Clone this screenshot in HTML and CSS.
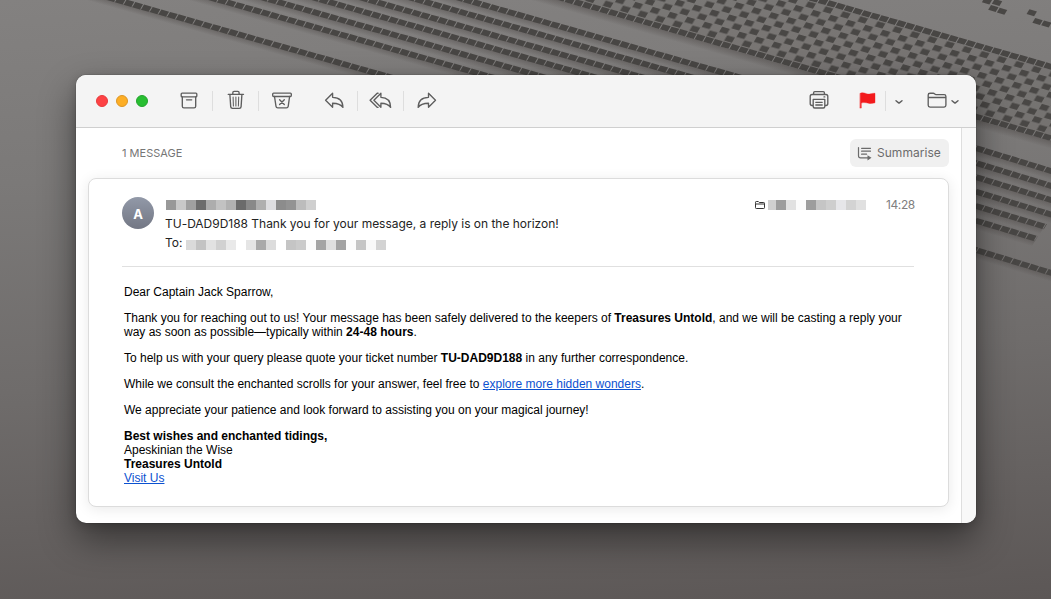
FILE: index.html
```html
<!DOCTYPE html>
<html lang="en">
<head>
<meta charset="utf-8">
<title>Mail</title>
<link rel="stylesheet" href="styles.css">
</head>
<body>
<svg class="wallpaper" viewBox="0 0 1051 599" aria-hidden="true">
  <defs>
    <pattern id="checker" width="17.36" height="14.3" patternUnits="userSpaceOnUse" x="-4.34" y="-3.575">
      <rect x="0.5" y="0.5" width="7.7" height="6.1"/>
      <rect x="9.18" y="7.65" width="7.7" height="6.1"/>
    </pattern>
    <linearGradient id="stripe" x2="0" y2="1"><stop offset="0" stop-color="#55504e" stop-opacity=".55"/><stop offset="1" stop-color="#55504e" stop-opacity="0"/></linearGradient>
    <g id="left"><rect class="shade" x="-300" y="2" width="700" height="7"/><path class="dash" d="M-304 0H400"/></g>
    <g id="right"><rect class="shade" x="-9" y="2" width="100" height="7"/><path class="dash" d="M-12.7 0H100"/></g>
  </defs>
  <g transform="matrix(1 .286 -.507 .855 786 12.3)">
    <rect class="veil" x="-290" y="-18" width="620" height="66"/>
    <rect class="checks" x="-290.8" y="-17.9" width="640" height="64.4"/>
    <path class="dash" d="M-264.14 -21.45H340M-264.14 50.05H340"/>
    <rect class="shade" x="-290" y="53" width="640" height="8"/>
  </g>
  <use href="#left" transform="matrix(1 .283 -.507 .855 482 4.4)"/>
  <use href="#left" transform="matrix(1 .283 -.507 .855 433.5 4.2)"/>
  <use href="#left" transform="matrix(1 .283 -.507 .855 421.5 14.8)"/>
  <use href="#left" transform="matrix(1 .283 -.507 .855 355 9.3)"/>
  <use href="#left" transform="matrix(1 .283 -.507 .855 356 24)"/>
  <use href="#left" transform="matrix(1 .283 -.507 .855 357.5 39.2)"/>
  <use href="#left" transform="matrix(1 .283 -.507 .855 134 4.7)"/>
  <use href="#right" transform="matrix(1 .305 -.507 .855 980 149.3)"/>
  <use href="#right" transform="matrix(1 .305 -.507 .855 981 164.5)"/>
  <use href="#right" transform="matrix(1 .305 -.507 .855 980 178.3)"/>
  <use href="#right" transform="matrix(1 .305 -.507 .855 979.5 192.7)"/>
  <g transform="matrix(1 .3 -.507 .855 979.3 207)"><rect class="shade" x="-9" y="2" width="74" height="7"/><path class="dash" d="M-12.7 0H66"/></g>
  <g transform="matrix(1 .3 -.507 .855 979.3 221.7)"><rect class="shade" x="-9" y="2" width="66" height="7"/><path class="dash" d="M-12.7 0H57"/></g>
  <use href="#right" transform="matrix(1 .305 -.507 .855 981.7 251.7)"/>
  <g class="bits">
    <path transform="matrix(1 .29 -.507 .855 987 1)" d="M-3.7-2.8h7.5v5.6h-7.5z"/>
    <path transform="matrix(1 .29 -.507 .855 997 2.5)" d="M-3.7-2.8h7.5v5.6h-7.5z"/>
    <path transform="matrix(1 .29 -.507 .855 993.3 8.5)" d="M-3.7-2.8h7.5v5.6h-7.5z"/>
    <path transform="matrix(1 .29 -.507 .855 1002 11.3)" d="M-3.7-2.8h7.5v5.6h-7.5z"/>
    <path transform="matrix(1 .29 -.507 .855 1031.7 12.7)" d="M-3.7-2.8h7.5v5.6h-7.5z"/>
    <path transform="matrix(1 .29 -.507 .855 1037.5 21.5)" d="M-3.7-2.8h7.5v5.6h-7.5z"/>
    <path transform="matrix(1 .29 -.507 .855 1046.3 24)" d="M-3.7-2.8h7.5v5.6h-7.5z"/>
  </g>
</svg>

<main class="window">
  <header class="toolbar">
    <div class="lights"><i class="light close"></i><i class="light minimise"></i><i class="light zoom"></i></div>
    <div class="group">
      <span class="tool"><svg class="icon" viewBox="0 0 24 24"><rect x="3.2" y="4.1" width="15.6" height="3.8" rx=".9"/><path d="M4.300 7.900v9.300q0 1.600 1.600 1.600h10.200q1.600 0 1.600-1.600V7.900M8.500 10.800h5.200"/></svg></span>
      <span class="tool"><svg class="icon" viewBox="0 0 24 24"><path d="M4.200 5.300h15.300M8.800 5.300V3.700q0-1.300 1.300-1.300h3.700q1.300 0 1.300 1.300v1.600M5.900 5.500l.8 12.100q.1 1.700 1.800 1.700h6.800q1.700 0 1.800-1.700l.8-12.100"/><path class="thin" d="M9.100 8l.3 8.900M11.900 8v8.900M14.700 8l-.3 8.900"/></svg></span>
      <span class="tool"><svg class="icon" viewBox="0 0 24 24"><rect x="2.7" y="4.1" width="18.6" height="3.4" rx=".9"/><path d="M4.500 7.500l1.500 9.800q.2 1.500 1.800 1.500h8.600q1.500 0 1.800-1.500l1.400-9.800M9.600 10.800l4.700 4.700M14.300 10.800l-4.700 4.700"/></svg></span>
    </div>
    <div class="group replies">
      <span class="tool"><svg class="icon" viewBox="0 0 24 24"><path d="M2.600 11.300l7-7v4c6.900.1 10.300 3.700 10.300 10.100-2-3.100-4.900-4.200-10.300-4.200v4.100z"/></svg></span>
      <span class="tool"><svg class="icon" viewBox="0 0 24 24"><path d="M4.900 11.300l7-7v4c6.700.1 9.700 3.700 9.700 10.100-2-3.100-4.500-4.200-9.700-4.200v4.100zM9.100 4.200H8.200L1.100 11.300l7.100 7h.9"/></svg></span>
      <span class="tool"><svg class="icon" viewBox="0 0 24 24"><path d="M20.500 11.300l-7-7v4C6.600 8.400 3.200 12 3.200 18.400c2-3.100 4.900-4.200 10.300-4.200v4.100z"/></svg></span>
    </div>
    <div class="actions">
      <svg class="icon" viewBox="0 0 24 24"><path d="M6.600 5.500V3.800q0-1.200 1.200-1.200h8.400q1.200 0 1.200 1.200v1.700M6.200 16.500H5.100q-1.900 0-1.900-1.900V7.400q0-1.900 1.900-1.900h13.800q1.900 0 1.900 1.900v7.200q0 1.900-1.900 1.900h-1.100M6.200 10.400h11.600v7.100q0 1.500-1.500 1.500H7.700q-1.500 0-1.500-1.500zM8.800 13.300h6.400M8.800 16h6.400M17 7.900h.8"/></svg>
      <span class="flag"><svg class="icon red" viewBox="0 0 24 24"><path d="M4.200 4.300c3.300-1.600 6.200.8 8.200.8 1.800 0 3.800-1 6.600-.8v9.500c-2.800.7-4.500.9-6.400.5-2.300-.6-4.600-1.200-7.300-.2v5H4.200z"/></svg></span>
      <svg class="chevron" viewBox="0 0 8 6"><path d="M1 1.700L3.600 3.900q.4.300.8 0L7 1.700"/></svg>
      <svg class="icon folder" viewBox="0 0 24 24"><path d="M3.200 8.500V6q0-1.800 1.800-1.800h3.200q.8 0 1.400.7t1.500.7h8q1.800 0 1.800 1.800v8.900q0 1.800-1.800 1.800H5q-1.800 0-1.800-1.800zH20.900"/></svg>
      <svg class="chevron" viewBox="0 0 8 6"><path d="M1 1.700L3.600 3.900q.4.300.8 0L7 1.700"/></svg>
    </div>
  </header>

  <div class="body">
    <section class="thread">
      <div class="thread-head">
        <span class="count">1 MESSAGE</span>
        <button class="summarise"><svg class="sum-icon" viewBox="0 0 16 16"><path d="M1.500 2.500v8.200q0 2.100 2.100 2.100h8.600M4.600 3.300h8.900M4.600 6.200h8.900M4.600 9.200h5"/><path class="head" d="M10.500 10.200l4 2.600-4 2.600z"/></svg>Summarise</button>
      </div>
      <article class="card">
        <div class="meta">
          <div class="avatar">A</div>
          <div class="lines">
            <div class="mosaic sender"><i style="background:#999"></i><i style="background:#c9c9c9"></i><i style="background:#a0a0a0"></i><i style="background:#6d6d6d"></i><i style="background:#adadad"></i><i style="background:#c2c2c2"></i><i style="background:#b1b1b1"></i><i style="background:#6b6b6b"></i><i style="background:#898989"></i><i style="background:#afafaf"></i><i style="background:#dddde0"></i><i style="background:#8c8c8c"></i><i style="background:#939393"></i><i style="background:#bcbcbc"></i><i style="background:#cfcfcf"></i></div>
            <div class="subject">TU-DAD9D188 Thank you for your message, a reply is on the horizon!</div>
            <div class="to"><span>To:</span><div class="mosaic"><i style="background:#dadada"></i><i style="background:#c3c3c3"></i><i style="background:#e2e2e2"></i><i style="background:#d1d1d1"></i><i style="background:#e9e9e9"></i><i></i><i style="background:#e5e5e5"></i><i style="background:#aaa"></i><i style="background:#dcdcdc"></i><i></i><i style="background:#c5c5c5"></i><i style="background:#cbcbcb"></i><i style="background:#fcfcfc"></i><i style="background:#a5a5a5"></i><i style="background:#dfdfdf"></i><i style="background:#a3a3a3"></i><i style="background:#fcfcfc"></i><i style="background:#c5c5c5"></i><i style="background:#f8f8f8"></i><i style="background:#d3d3d3"></i></div></div>
          </div>
          <div class="stamp">
            <svg class="mini" viewBox="0 0 12 10"><path d="M1.500 3.700V2.300q0-.8.8-.8h2l1 1h4.400q.8 0 .8.800v4.400q0 .8-.8.800H2.300q-.8 0-.8-.8zM1.500 4h9"/></svg>
            <div class="mosaic"><i class="short" style="background:#d0d0d0"></i><i style="background:#9d9d9d"></i><i style="background:#e1e1e1"></i><i style="background:#fbfbfb"></i><i style="background:#9d9d9d"></i><i style="background:#c5c5c5"></i><i style="background:#cecece"></i><i style="background:#e6e6e9"></i><i style="background:#d3d3d3"></i><i style="background:#e0e0e0"></i></div>
            <time>14:28</time>
          </div>
        </div>
        <div class="letter">
          <p>Dear Captain Jack Sparrow,</p>
          <p>Thank you for reaching out to us! Your message has been safely delivered to the keepers of <b>Treasures Untold</b>, and we will be casting a reply your<br>way as soon as possible—typically within <b>24-48 hours</b>.</p>
          <p>To help us with your query please quote your ticket number <b>TU-DAD9D188</b> in any further correspondence.</p>
          <p>While we consult the enchanted scrolls for your answer, feel free to <a href="#">explore more hidden wonders</a>.</p>
          <p>We appreciate your patience and look forward to assisting you on your magical journey!</p>
          <p><b>Best wishes and enchanted tidings,</b><br>Apeskinian the Wise<br><b>Treasures Untold</b><br><a href="#">Visit Us</a></p>
        </div>
      </article>
    </section>
    <div class="gutter"></div>
  </div>
</main>
</body>
</html>
```
FILE: styles.css
```css
* { box-sizing: border-box; }
body {
  margin: 0; width: 1051px; height: 599px; overflow: hidden; position: relative;
  padding: 75px 75px 76px 76px;
  background: linear-gradient(177deg, #838180 0%, #7b7978 28%, #6f6c6b 60%, #5c5756 100%);
  font-family: Inter, sans-serif;
}
.wallpaper { position: absolute; inset: 0; width: 1051px; height: 599px; }
.dash { stroke: #484644; stroke-width: 6; stroke-dasharray: 7.7 .98; fill: none; }
.checks { fill: url(#checker); }
#checker rect, .bits path { fill: #494745; }
.shade { fill: url(#stripe); }
.veil { fill: #5e5a58; opacity: .22; }
.window {
  position: relative; width: 900px; height: 448px; border-radius: 10px; overflow: hidden;
  background: #fff; display: flex; flex-direction: column;
  box-shadow: 0 0 1px rgba(0,0,0,.7), 0 16px 36px rgba(0,0,0,.46), 0 2px 10px rgba(0,0,0,.16);
}
.toolbar {
  height: 53px; flex: none; background: #f4f4f4; border-bottom: 1px solid #cfcfcf;
  display: flex; align-items: center; padding: 0 17px 0 20px;
}
.lights { display: flex; gap: 8px; width: 71px; }
.light { width: 12px; height: 12px; border-radius: 50%; border: 1px solid #e83a3c; background: #fd4244; }
.minimise { background: #fdae25; border-color: #dd9624; }
.zoom { background: #28be31; border-color: #23a42c; }
.group { display: flex; }
.replies { margin-left: 7px; }
.tool { width: 46px; display: flex; justify-content: center; height: 20px; align-items: center; border-right: 1px solid #dedede; }
.tool:last-child { border-right: 0; }
.icon { width: 24px; height: 24px; flex: none; fill: none; stroke: #5e5e5e; stroke-width: 1.35; stroke-linejoin: round; stroke-linecap: round; }
.thin { stroke-width: 1.05; }
.actions { margin-left: auto; display: flex; align-items: center; }
.flag { display: flex; align-items: center; height: 20px; width: 30px; margin-left: 25px; border-right: 1px solid #dedede; }
.red { fill: #f31a1c; stroke: #f31a1c; stroke-width: .4; }
.chevron { width: 8px; height: 6px; margin: 2px 0 0 9px; fill: none; stroke: #5e5e5e; stroke-width: 1.4; stroke-linecap: round; }
.folder { margin-left: 22px; }
.folder + .chevron { margin-left: 2px; }
.body { flex: 1; display: flex; }
.thread { flex: 1; padding: 11px 12px 0; display: flex; flex-direction: column; }
.gutter { width: 15px; border-left: 1px solid #dedede; background: #f8f8f8; }
.thread-head { display: flex; justify-content: space-between; align-items: center; height: 28px; padding-left: 34px; }
.count { font-size: 11px; color: #767676; letter-spacing: .02px; }
.summarise {
  width: 99px; height: 28px; border: 0; border-radius: 6px; background: #f0f0f0; padding: 0 0 1px 7px;
  display: flex; align-items: center; gap: 4px; color: #6c6c6c; font: 400 12px Inter, sans-serif; letter-spacing: .03px;
}
.sum-icon { width: 16px; height: 16px; fill: none; stroke: #6b6b6b; stroke-width: 1.2; stroke-linecap: round; }
.sum-icon .head { fill: #6b6b6b; stroke: none; }
.card {
  margin-top: 11px; width: 861px; height: 329px; border: 1px solid #dcdcdc; border-radius: 8px; background: #fff;
  box-shadow: 0 2px 14px rgba(0,0,0,.09); padding: 0 34px 0 33px;
}
.meta { display: flex; height: 88px; border-bottom: 1px solid #e0e0e0; padding-top: 18px; }
.avatar {
  width: 32px; height: 32px; border-radius: 50%; flex: none; color: #fff; font: 700 13px/34px Inter, sans-serif; text-align: center;
  background: linear-gradient(#9299a8, #737784);
}
.lines { margin-left: 12px; flex: 1; }
.mosaic { display: flex; height: 10px; }
.mosaic i { width: 10px; height: 10px; }
.mosaic .short { width: 8px; }
.sender { margin-top: 3px; }
.subject { font-size: 12px; line-height: 15px; margin-top: 6px; color: #232323; white-space: nowrap; letter-spacing: -.02px; margin-left: -1px; }
.to { display: flex; font-size: 12px; line-height: 15px; margin-top: 4px; margin-left: -1px; color: #232323; }
.to span { width: 21px; }
.to .mosaic { margin-top: 5px; }
.stamp { display: flex; align-items: flex-start; padding-top: 3px; }
.mini { width: 12px; height: 10px; fill: none; stroke: #333; stroke-width: 1; margin-right: 2px; }
.stamp time { font-size: 12px; line-height: 10px; color: #808080; margin-left: 20px; width: 28px; white-space: nowrap; letter-spacing: -.4px; }
.letter { font: 12px/14px "Liberation Sans", sans-serif; color: #000; padding: 18px 0 0 2px; white-space: nowrap; }
.letter p { margin: 0 0 12px; }
.letter a { color: #0b51d0; text-decoration: underline; }
```
